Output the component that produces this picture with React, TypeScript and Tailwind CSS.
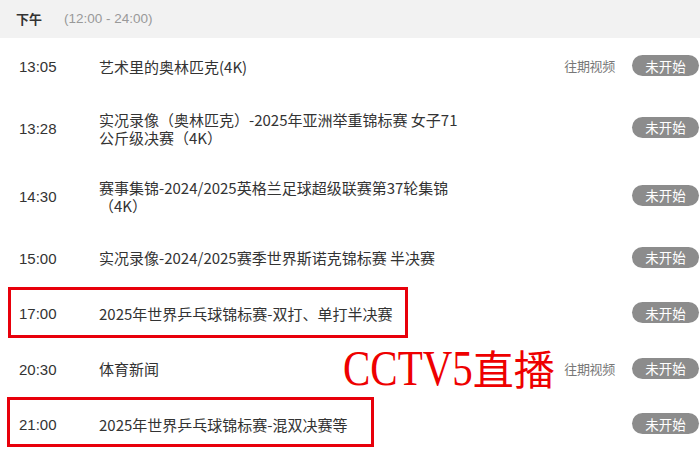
import React from 'react'

type Program = {
  time: string
  title: string
  past?: boolean
}

const programs: Program[] = [
  { time: '13:05', title: '艺术里的奥林匹克(4K)', past: true },
  { time: '13:28', title: '实况录像（奥林匹克）-2025年亚洲举重锦标赛 女子71公斤级决赛（4K）' },
  { time: '14:30', title: '赛事集锦-2024/2025英格兰足球超级联赛第37轮集锦（4K）' },
  { time: '15:00', title: '实况录像-2024/2025赛季世界斯诺克锦标赛 半决赛' },
  { time: '17:00', title: '2025年世界乒乓球锦标赛-双打、单打半决赛' },
  { time: '20:30', title: '体育新闻', past: true },
  { time: '21:00', title: '2025年世界乒乓球锦标赛-混双决赛等' },
]

const cjk = "font-['Noto_Sans_CJK_SC',sans-serif]"
const latin = "font-['Liberation_Sans','Noto_Sans_CJK_SC',sans-serif]"

const App: React.FC = () => {
  return (
    <div className="relative w-[700px] h-[451px] overflow-hidden bg-white">
      {/* 下午のヘッダー */}
      <div className="flex items-center h-[38px] bg-[#f2f2f2] pl-4">
        <span className={`${cjk} text-[13px] font-bold text-[#333]`}>下午</span>
        <span className={`${latin} text-[13.5px] text-[#999] ml-[22px]`}>
          (12:00 - 24:00)
        </span>
      </div>

      {/* 番組リスト */}
      <ul>
        {programs.map((p) => (
          <li key={p.time} className="flex items-center min-h-[55px] py-[15px]">
            <div className={`${latin} w-[99px] pl-[19px] pt-[3px] text-[15px] text-[#333]`}>
              {p.time}
            </div>
            <div className={`${cjk} w-[364px] pt-[2px] text-[15px] leading-[18px] text-[#333]`}>
              {p.title}
            </div>
            <div className="flex flex-1 items-center justify-end pr-[1px]">
              {p.past && (
                <span className={`${cjk} text-[13px] text-[#777] tracking-[-0.3px] mr-[17px]`}>
                  往期视频
                </span>
              )}
              <span
                className={`${cjk} flex items-center justify-center w-[67px] h-[21px] rounded-full bg-[#8c8c8c] text-[13.5px] text-white`}
              >
                未开始
              </span>
            </div>
          </li>
        ))}
      </ul>

      {/* 注釈（赤枠・テキスト） */}
      <div className="absolute left-[8px] top-[287px] w-[400px] h-[51px] border-[3px] border-[#e8000b]" />
      <div className="absolute left-[7px] top-[397px] w-[367px] h-[50px] border-[3px] border-[#e8000b]" />
      <div className="absolute left-[343px] top-[341px] flex items-center h-[52px] text-[#ee0000] whitespace-nowrap">
        <span className="inline-block scale-y-[1.25] text-[41px] leading-[52px] font-['Liberation_Serif',serif]">
          CCTV5
        </span>
        <span className="text-[41px] leading-[52px] font-['Noto_Sans_CJK_SC',serif]">
          直播
        </span>
      </div>
    </div>
  )
}

export default App
